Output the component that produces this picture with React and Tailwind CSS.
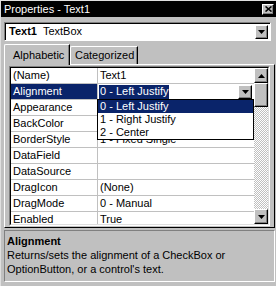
import React from 'react';

const raised = 'border border-t-white border-l-white border-r-black border-b-black shadow-[inset_-1px_-1px_0_#808080]';

const rows = [
  { name: '(Name)', value: 'Text1' },
  { name: 'Alignment', value: '0 - Left Justify', active: true },
  { name: 'Appearance', value: '' },
  { name: 'BackColor', value: '' },
  { name: 'BorderStyle', value: '1 - Fixed Single', under: true },
  { name: 'DataField', value: '' },
  { name: 'DataSource', value: '' },
  { name: 'DragIcon', value: '(None)' },
  { name: 'DragMode', value: '0 - Manual' },
  { name: 'Enabled', value: 'True' },
];

function Arrow({ up }) {
  return (
    <svg width="7" height="4" viewBox="0 0 7 4">
      {up ? <path d="M3.5 0 L7 4 L0 4 Z" fill="#000" /> : <path d="M0 0 L7 0 L3.5 4 Z" fill="#000" />}
    </svg>
  );
}

function DropButton({ className = '' }) {
  return (
    <div className={`flex items-center justify-center bg-[#c0c0c0] ${raised} ${className}`}>
      <Arrow />
    </div>
  );
}

export default function App() {
  return (
    <div className="w-[276px] h-[286px] bg-[#c0c0c0] border-t border-l border-[#dfdfdf] overflow-hidden font-['Liberation_Sans',Arial,sans-serif] text-[11px] leading-none text-black">
      {/* title bar */}
      <div className="h-[16px] bg-black flex items-center justify-between pl-[3px] pr-[2px]">
        <span className="text-white text-[11px]">Properties - Text1</span>
        <div className={`w-[12px] h-[11px] bg-[#c0c0c0] flex items-center justify-center ${raised}`}>
          <svg width="7" height="6" viewBox="0 0 7 6">
            <path d="M0.5 0.5 L6.5 5.5 M6.5 0.5 L0.5 5.5" stroke="#000" strokeWidth="1.6" />
          </svg>
        </div>
      </div>

      {/* object combo */}
      <div className="mt-[5px] ml-[3px] w-[267px] h-[19px] bg-white border border-t-[#808080] border-l-[#808080] border-r-white border-b-white shadow-[inset_1px_1px_0_#000] flex items-center">
        <span className="pl-[4px] font-bold">Text1</span>
        <span className="pl-[6px]">TextBox</span>
        <DropButton className="ml-auto mr-[2px] w-[13px] h-[14px]" />
      </div>

      {/* tabs */}
      <div className="mt-[3px] ml-[3px] h-[20px] flex items-end">
        <div className="relative z-10 h-[21px] -mb-[1px] w-[66px] bg-[#c0c0c0] border-t border-l border-white border-r border-r-black rounded-tl-[2px] shadow-[inset_-1px_0_0_#808080] flex items-center pl-[8px]">
          Alphabetic
        </div>
        <div className="h-[18px] w-[68px] bg-[#c0c0c0] border-t border-l border-white border-r border-r-black rounded-tl-[2px] shadow-[inset_-1px_0_0_#808080] flex items-center pl-[4px]">
          Categorized
        </div>
      </div>

      {/* tab panel */}
      <div className="ml-[3px] w-[271px] border-t border-l border-white border-r border-r-black border-b border-b-black pt-[1px] pl-[4px] pr-[3px] pb-[1px]">
        <div className="h-[160px] w-[261px] border border-t-[#808080] border-l-[#808080] border-r-white border-b-white">
          <div className="h-full border border-t-black border-l-black border-r-[#dfdfdf] border-b-[#dfdfdf] bg-white flex overflow-hidden">
            <div className="relative flex-1">
              {rows.map((r) => (
                <div key={r.name} className="flex h-[16px] border-b border-[#c0c0c0]">
                  <div className={`w-[87px] border-r border-[#c0c0c0] pl-[2px] flex items-center ${r.active ? 'bg-[#0a246a] text-white' : ''}`}>
                    {r.name}
                  </div>
                  {r.active ? (
                    <div className="flex-1 flex items-center pl-[1px]">
                      <span className="bg-[#0a246a] text-white px-[1px] h-[14px] flex items-center">{r.value}</span>
                      <DropButton className="ml-auto mr-[2px] w-[14px] h-[14px]" />
                    </div>
                  ) : (
                    <div className={`flex-1 pl-[2px] flex overflow-hidden ${r.under ? 'items-end' : 'items-center'}`}>
                      <span className={r.under ? 'h-[9px] overflow-hidden flex items-end pb-[2px]' : ''}>{r.value}</span>
                    </div>
                  )}
                </div>
              ))}
              {/* dropdown list */}
              <div className="absolute left-[86px] top-[31px] w-[157px] h-[41px] bg-white border border-black">
                <div className="h-[13px] bg-[#0a246a] text-white pl-[2px] flex items-center">0 - Left Justify</div>
                <div className="h-[13px] pl-[2px] flex items-center">1 - Right Justify</div>
                <div className="h-[13px] pl-[2px] flex items-center">2 - Center</div>
              </div>
            </div>
            {/* scrollbar */}
            <div className="w-[14px] flex flex-col bg-[image:repeating-conic-gradient(#c0c0c0_0_25%,#fff_0_50%)] bg-[length:2px_2px]">
              <div className={`h-[15px] bg-[#c0c0c0] flex items-center justify-center ${raised}`}>
                <Arrow up />
              </div>
              <div className={`h-[24px] bg-[#c0c0c0] ${raised}`} />
              <div className="flex-1" />
              <div className={`h-[15px] bg-[#c0c0c0] flex items-center justify-center ${raised}`}>
                <Arrow />
              </div>
            </div>
          </div>
        </div>
      </div>

      {/* description */}
      <div className="mt-[2px] ml-[3px] w-[271px] h-[52px] border border-t-[#808080] border-l-[#808080] border-r-white border-b-white px-[2px] pt-[3px] leading-[14px]">
        <div className="font-bold">Alignment</div>
        <div>Returns/sets the alignment of a CheckBox or</div>
        <div>OptionButton, or a control's text.</div>
      </div>
    </div>
  );
}
